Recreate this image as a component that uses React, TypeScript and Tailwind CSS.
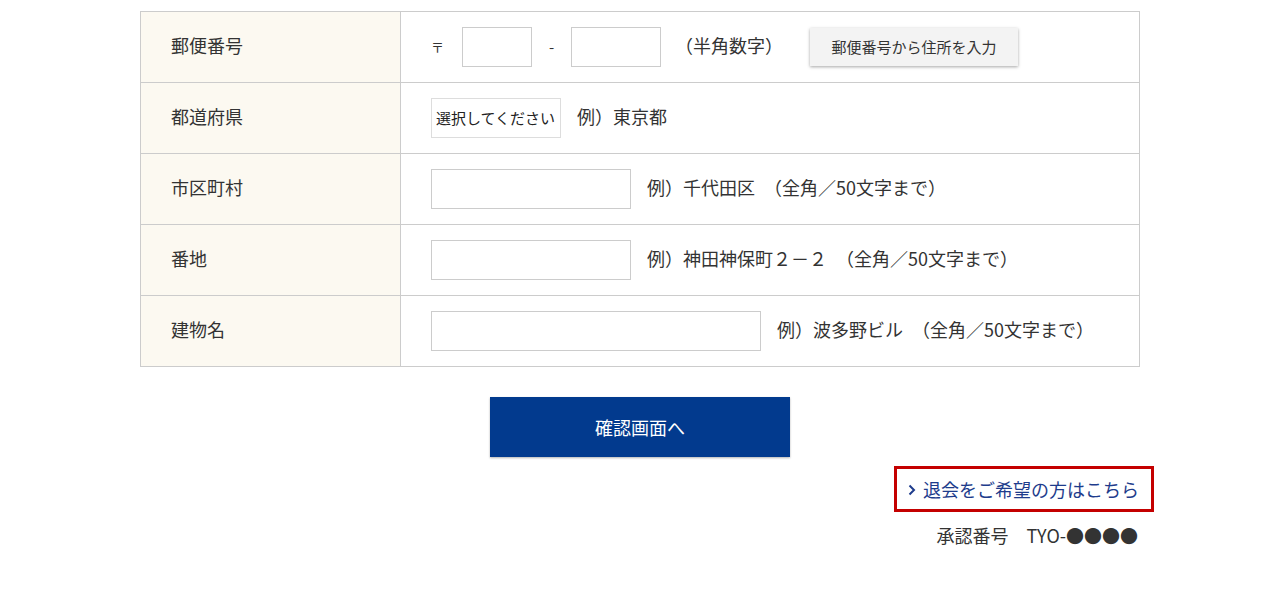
import React from 'react';

const font = { fontFamily: '"Noto Sans CJK JP", "Noto Sans", sans-serif' };

interface Row {
  label: string;
  content: React.ReactNode;
}

const TextInput: React.FC<{ width: string }> = ({ width }) => (
  <input type="text" className={`${width} h-[40px] border border-[#cccccc] bg-white px-2 outline-none`} />
);

const Hint: React.FC<{ children: React.ReactNode; className?: string }> = ({ children, className }) => (
  <span className={`text-[18px] text-[#333333] whitespace-pre pb-[3px] ${className || ''}`}>{children}</span>
);

const App: React.FC = () => {
  const rows: Row[] = [
    {
      label: '郵便番号',
      content: (
        <div className="flex items-center">
          <span className="text-[13px] text-[#333333] w-[31px]">〒</span>
          <input type="text" className="w-[70px] h-[40px] border border-[#cccccc] bg-white outline-none" />
          <span className="text-[15px] text-[#333333] w-[39px] text-center">-</span>
          <input type="text" className="w-[90px] h-[40px] border border-[#cccccc] bg-white outline-none" />
          <Hint className="ml-[14px]">（半角数字）</Hint>
          <button
            type="button"
            className="ml-[27px] w-[208px] h-[38px] bg-[#f3f3f3] text-[15px] text-[#333333] shadow-[0_1px_3px_rgba(0,0,0,0.35)]"
          >
            郵便番号から住所を入力
          </button>
        </div>
      ),
    },
    {
      label: '都道府県',
      content: (
        <div className="flex items-center">
          <div className="h-[40px] w-[130px] border border-[#dddddd] bg-white flex items-center pl-[4px] text-[15px] text-[#222222]">
            選択してください
          </div>
          <Hint className="ml-[16px]">例）東京都</Hint>
        </div>
      ),
    },
    {
      label: '市区町村',
      content: (
        <div className="flex items-center">
          <TextInput width="w-[200px]" />
          <Hint className="ml-[16px]">例）千代田区　（全角／50文字まで）</Hint>
        </div>
      ),
    },
    {
      label: '番地',
      content: (
        <div className="flex items-center">
          <TextInput width="w-[200px]" />
          <Hint className="ml-[16px]">例）神田神保町２－２　（全角／50文字まで）</Hint>
        </div>
      ),
    },
    {
      label: '建物名',
      content: (
        <div className="flex items-center">
          <TextInput width="w-[330px]" />
          <Hint className="ml-[16px]">例）波多野ビル　（全角／50文字まで）</Hint>
        </div>
      ),
    },
  ];

  return (
    <div className="min-h-[600px] bg-white pt-[11px]" style={font}>
      <div className="w-[1000px] mx-auto">
        <div className="border-t border-x border-[#cccccc]">
          {rows.map(row => (
            <div key={row.label} className="flex h-[71px] border-b border-[#cccccc]">
              <div className="w-[260px] shrink-0 bg-[#fcf9f1] border-r border-[#cccccc] flex items-center pl-[30px] pb-[3px] text-[18px] text-[#333333]">
                {row.label}
              </div>
              <div className="flex-1 flex items-center pl-[30px]">{row.content}</div>
            </div>
          ))}
        </div>

        <div className="flex justify-center mt-[30px]">
          <button
            type="button"
            className="w-[300px] h-[60px] bg-[#023a8e] text-white text-[18px] shadow-[0_1px_2px_rgba(0,0,0,0.3)]"
          >
            確認画面へ
          </button>
        </div>

        <div className="flex justify-end mt-[9px] -mr-[14px]">
          <a
            href="#"
            className="flex items-center h-[46px] border-[3px] border-[#c40000] pl-[10px] pr-[12px] text-[18px] text-[#1e3c8c]"
          >
            <svg width="10" height="12" viewBox="0 0 10 12" className="mr-[6px] mt-[2px]">
              <path d="M2.5 1.5 L7 6 L2.5 10.5" fill="none" stroke="#1e3c8c" strokeWidth="2" />
            </svg>
            退会をご希望の方はこちら
          </a>
        </div>

        <div className="flex justify-end mt-[10px] pr-[2px] text-[18px] text-[#333333] whitespace-pre">
          承認番号　TYO-●●●●
        </div>
      </div>
    </div>
  );
};

export default App;
